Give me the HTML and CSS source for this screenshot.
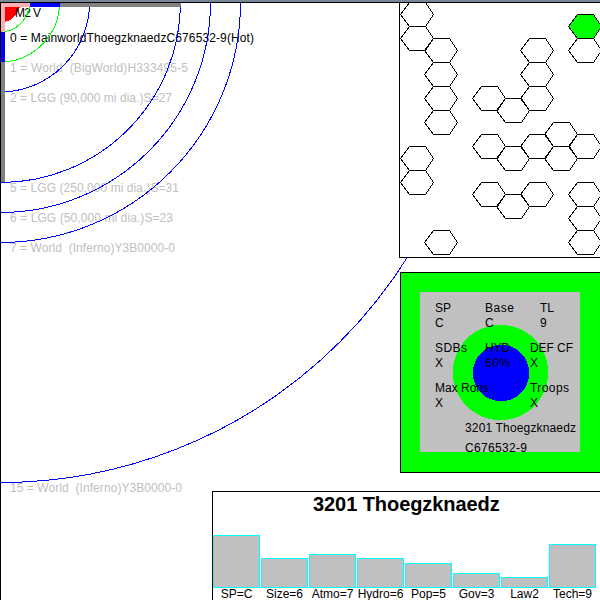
FILE: index.html
```html
<!DOCTYPE html>
<html lang="en">
<head>
<meta charset="utf-8">
<title>3201 Thoegzknaedz</title>
<link rel="stylesheet" href="styles.css">
</head>
<body>
<main class="screen">
  <svg class="system" viewBox="0 0 600 600" width="600" height="600">
    <circle class="star" cx="0" cy="2" r="20.5"/>
    <g class="label">
      <text class="dark" x="15" y="17" textLength="26">M2 V</text>
      <text class="dark" x="10" y="42" textLength="244">0 = MainworldThoegzknaedzC676532-9(Hot)</text>
      <text x="10" y="72" textLength="178">1 = World  (BigWorld)H333495-5</text>
      <text x="10" y="102" textLength="162">2 = LGG (90,000 mi dia.)S=27</text>
      <text x="10" y="192" textLength="169">5 = LGG (250,000 mi dia.)S=31</text>
      <text x="10" y="222" textLength="163">6 = LGG (50,000 mi dia.)S=23</text>
      <text x="10" y="252" textLength="165">7 = World  (Inferno)Y3B0000-0</text>
      <text x="10" y="492" textLength="172">15 = World  (Inferno)Y3B0000-0</text>
    </g>
    <g class="orbit">
      <circle class="warm" cx="0" cy="2.5" r="29.5"/>
      <circle class="warm" cx="0" cy="2.5" r="59.5"/>
      <circle cx="0" cy="2.5" r="89.5"/>
      <circle cx="0.5" cy="2.5" r="180"/>
      <circle cx="0.5" cy="2.5" r="210"/>
      <circle cx="0.5" cy="2.5" r="240"/>
      <circle cx="0.5" cy="2.5" r="480"/>
    </g>
    <path fill="#808080" d="M1 3H181V7H5V182H1Z"/>
    <path fill="#0000ff" d="M1 3H60V7H5V62H1Z"/>
    <path fill="#ffafaf" d="M1 3H30V7H5V32H1Z"/>
    <path fill="#778899" d="M0 0H600V2H0Z"/>
    <path fill="#000" d="M0 2H600V3H1V600H0Z"/>
  </svg>

  <section class="sector">
    <svg viewBox="400 3 200 254" width="200" height="254">
      <defs><path id="hex" d="M.5 .5L9.5 -11.5H25.5L33.5 .5L25.5 12.5H9.5Z"/></defs>
      <g class="hexes">
        <use href="#hex" x="400" y="14"/><use href="#hex" x="400" y="38"/>
        <use href="#hex" x="400" y="158"/><use href="#hex" x="400" y="182"/>
        <use href="#hex" x="424" y="50"/><use href="#hex" x="424" y="74"/>
        <use href="#hex" x="424" y="98"/><use href="#hex" x="424" y="122"/>
        <use href="#hex" x="424" y="242"/>
        <use href="#hex" x="472" y="98"/><use href="#hex" x="472" y="146"/><use href="#hex" x="472" y="194"/>
        <use href="#hex" x="496" y="110"/><use href="#hex" x="496" y="158"/><use href="#hex" x="496" y="206"/>
        <use href="#hex" x="520" y="50"/><use href="#hex" x="520" y="74"/><use href="#hex" x="520" y="98"/>
        <use href="#hex" x="520" y="146"/><use href="#hex" x="520" y="194"/>
        <use href="#hex" x="544" y="134"/><use href="#hex" x="544" y="158"/>
        <use class="current" href="#hex" x="568" y="26"/><use href="#hex" x="568" y="50"/>
        <use href="#hex" x="568" y="146"/><use href="#hex" x="568" y="194"/>
        <use href="#hex" x="568" y="218"/><use href="#hex" x="568" y="242"/>
      </g>
    </svg>
  </section>

  <section class="counter">
    <svg viewBox="401 273 199 199" width="199" height="199">
      <path fill="#c0c0c0" d="M420 292H580V452H420Z"/>
      <circle fill="#00ff00" cx="500.5" cy="372.5" r="47.7"/>
      <circle fill="#0000ff" cx="501" cy="373" r="28.2"/>
      <g class="label world">
        <text x="435" y="312" textLength="16">SP</text>
        <text x="485" y="312" textLength="29">Base</text>
        <text x="540" y="312" textLength="14">TL</text>
        <text x="435" y="327">C</text>
        <text x="485" y="327">C</text>
        <text x="540" y="327">9</text>
        <text x="435" y="352" textLength="32">SDBs</text>
        <text x="485" y="352" textLength="25">HYD</text>
        <text x="530" y="352" textLength="43">DEF CF</text>
        <text x="435" y="367">X</text>
        <text x="485" y="367" textLength="25">60%</text>
        <text x="530" y="367">X</text>
        <text x="435" y="392" textLength="54">Max Rons</text>
        <text x="530" y="392" textLength="39">Troops</text>
        <text x="435" y="407">X</text>
        <text x="530" y="407">X</text>
        <text x="465" y="432" textLength="111">3201 Thoegzknaedz</text>
        <text x="465" y="452" textLength="62">C676532-9</text>
      </g>
    </svg>
  </section>

  <section class="profile">
    <h1>3201 Thoegzknaedz</h1>
    <div class="bars">
      <div class="col"><i style="height:53px"></i><span>SP=C</span></div>
      <div class="col"><i style="height:30px"></i><span>Size=6</span></div>
      <div class="col"><i style="height:34px"></i><span>Atmo=7</span></div>
      <div class="col"><i style="height:30px"></i><span>Hydro=6</span></div>
      <div class="col"><i style="height:25px"></i><span>Pop=5</span></div>
      <div class="col"><i style="height:15px"></i><span>Gov=3</span></div>
      <div class="col"><i style="height:11px"></i><span>Law2</span></div>
      <div class="col"><i style="height:44px"></i><span>Tech=9</span></div>
    </div>
  </section>
</main>
</body>
</html>
```
FILE: styles.css
```css
* { box-sizing: border-box; }
body { margin: 0; background: #fff; color: #000; font: 12px "Liberation Sans", Arial, sans-serif; }
.screen { position: relative; width: 600px; height: 600px; overflow: hidden; }
svg { display: block; shape-rendering: crispEdges; }
.label { font-size: 12px; fill: #c0c0c0; }
.label text { white-space: pre; }
.label .dark, .world { fill: #000; }
.star { fill: #ff0000; }
.orbit { fill: none; stroke: #0000ff; stroke-width: 1; }
.orbit .warm { stroke: #00ff00; }

.sector, .counter, .profile { position: absolute; background: #fff; border: 1px solid #000; border-right: 0; }
.sector { left: 399px; top: 2px; width: 201px; height: 256px; }
.hexes { fill: none; stroke: #000; stroke-width: 1; }
.current { fill: #00ff00; }
.counter { left: 400px; top: 272px; width: 200px; height: 201px; background: #00ff00; }

.profile { left: 212px; top: 491px; width: 388px; height: 109px; border-bottom: 0; overflow: hidden; }
.profile h1 { margin: 0; height: 43px; padding: 1px 0 0 100px; font-size: 20px; line-height: 23px; letter-spacing: -.07px; white-space: nowrap; }
.bars { display: flex; gap: 1px; height: 65px; }
.col { flex: 0 0 47px; display: flex; flex-direction: column; align-items: center; justify-content: flex-end; }
.col i { flex: none; width: 47px; background: #c0c0c0; border: 1px solid #00ffff; }
.col span { height: 12px; line-height: 13px; white-space: nowrap; }
```
